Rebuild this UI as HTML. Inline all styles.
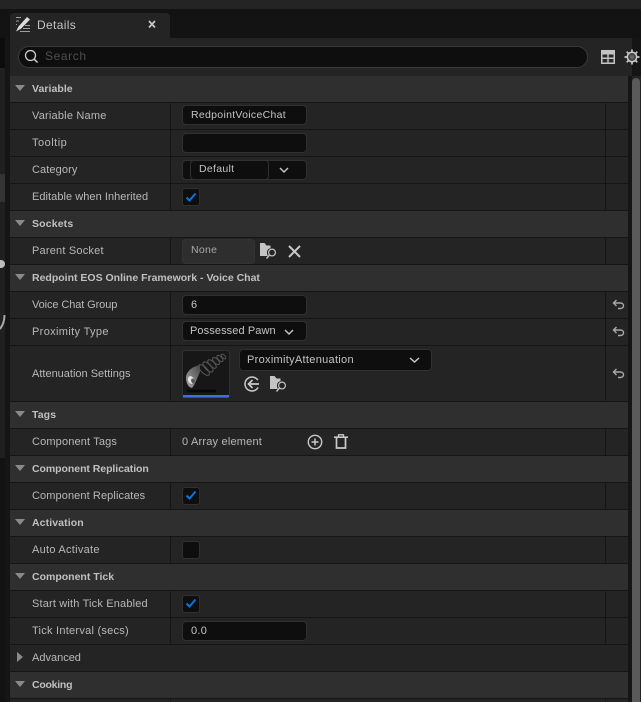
<!DOCTYPE html>
<html><head><meta charset="utf-8"><style>
html,body{margin:0;padding:0;background:#151515;width:641px;height:702px;overflow:hidden}
body{position:relative;font-family:"Liberation Sans",sans-serif;font-size:11px;color:#c0c0c0}
.a{position:absolute}
.h{position:absolute;left:10px;width:618px;height:26px;background:#2f2f2f;border-bottom:1px solid #151515}
.r{position:absolute;left:10px;width:618px;height:26px;background:#242424;border-bottom:1px solid #151515}
.r:before{content:"";position:absolute;left:160px;top:0;bottom:0;width:1px;background:#151515}
.r:after{content:"";position:absolute;left:595px;top:0;bottom:0;width:1px;background:#151515}
.t{position:absolute;left:32px;white-space:nowrap;line-height:13px;color:#b8b8b8}
.b{position:absolute;left:32px;white-space:nowrap;font-weight:bold;font-size:10.5px;line-height:13px;color:#c0c0c0}
.tri{position:absolute;left:15px;width:0;height:0;border-left:5px solid transparent;border-right:5px solid transparent;border-top:6px solid #8a8a8a}
.in{position:absolute;box-sizing:border-box;left:182px;width:125px;height:20px;background:#0e0e0e;border:1px solid #303030;border-radius:4px;color:#c4c4c4;white-space:nowrap;letter-spacing:.3px;line-height:18px;padding-left:8px;font-size:10.5px}
.cb{position:absolute;box-sizing:border-box;left:182px;width:18px;height:18px;background:#0e0e0e;border:1px solid #303030;border-radius:3px}
svg{position:absolute;overflow:visible}
</style></head><body>
<div class="a" style="left:0;top:0;width:641px;height:9px;background:#242424"></div>
<div class="a" style="left:0;top:9px;width:641px;height:29px;background:#131313"></div>
<div class="a" style="left:0;top:38px;width:5px;height:30px;background:#0c0c0c"></div>
<div class="a" style="left:0;top:68px;width:5px;height:220px;background:#202020"></div>
<div class="a" style="left:0;top:174px;width:5px;height:28px;background:#343434"></div>
<div class="a" style="left:0;top:260px;width:5px;height:8px;background:#bdbdbd;border-radius:0 4px 4px 0"></div>
<div class="a" style="left:0;top:288px;width:5px;height:170px;background:#202020"></div>
<div class="a" style="left:0;top:458px;width:5px;height:244px;background:#121212"></div>
<svg style="left:0;top:310px" width="6" height="25"><path d="M4.5 5 Q4.5 13 0 19" stroke="#a8a8a8" stroke-width="2" fill="none"/></svg>

<!-- panel -->
<div class="a" style="left:10px;top:38px;width:622px;height:664px;background:#242424"></div>
<div class="a" style="left:10px;top:13px;width:160px;height:25px;background:#242424;border-radius:4px 4px 0 0"></div>
<svg style="left:15px;top:16px" width="16" height="16" viewBox="0 0 16 16"><path d="M1 1.5h5M1 5h3M1 8.5h1M10 9.5h5M8 12.5h7M5 15.5h10" stroke="#a0a0a0" stroke-width="1" fill="none"/><path d="M3.5 10.5 L12 1 L15 3.5 L6 12.8 L1 15.5 Z" fill="#dcdcdc"/></svg>
<div class="a" style="left:37px;top:18px;font-size:12px;letter-spacing:.35px;line-height:14px;color:#c4c4c4">Details</div>
<svg style="left:148px;top:20px" width="8" height="9"><path d="M1 1L7 7.5M7 1L1 7.5" stroke="#c8c8c8" stroke-width="1.7"/></svg>

<div class="a" style="box-sizing:border-box;left:18px;top:46px;width:570px;height:22px;background:#0e0e0e;border:1px solid #3a3a3a;border-radius:11px"></div>
<svg style="left:24px;top:49px" width="15" height="15"><circle cx="6.5" cy="6.5" r="5" stroke="#d0d0d0" stroke-width="1.3" fill="none"/><path d="M10 10L13.5 13.5" stroke="#d0d0d0" stroke-width="1.5"/></svg>
<div class="a" style="left:45px;top:49px;font-size:12px;letter-spacing:.6px;line-height:14px;color:#4e4e4e">Search</div>
<svg style="left:601px;top:50px" width="14" height="14"><rect x="0" y="0" width="14" height="14" fill="#c4c4c4"/><path d="M1.5 4.5H6.3V7.5H1.5zM7.7 4.5H12.5V7.5H7.7zM1.5 9H6.3V12.5H1.5zM7.7 9H12.5V12.5H7.7z" fill="#2a2a2a"/></svg>
<svg style="left:624px;top:49px" width="16" height="16" viewBox="0 0 16 16"><circle cx="8" cy="8" r="4.7" fill="#444" stroke="#c8c8c8" stroke-width="1.5"/><circle cx="8" cy="8" r="2" fill="#666"/><path d="M8 .5v2.5M8 13v2.5M.5 8H3M13 8h2.5M2.7 2.7l1.8 1.8M11.5 11.5l1.8 1.8M2.7 13.3l1.8-1.8M11.5 4.5l1.8-1.8" stroke="#c8c8c8" stroke-width="1.7"/></svg>

<!-- scrollbar -->
<div class="a" style="left:628px;top:76px;width:4px;height:626px;background:#151515"></div>
<div class="a" style="left:632px;top:76px;width:9px;height:626px;background:#242424"></div>
<div class="a" style="left:632px;top:78px;width:8px;height:624px;background:#5a5a5a;border-radius:4px 4px 0 0"></div>

<!-- rows -->
<div class="h" style="top:76px"></div><div class="tri" style="top:85px"></div><div class="b" style="top:83px;letter-spacing:.05px">Variable</div>
<div class="r" style="top:103px"></div><div class="t" style="top:110px;letter-spacing:.2px">Variable Name</div>
<div class="r" style="top:130px"></div><div class="t" style="top:137px;letter-spacing:.5px">Tooltip</div>
<div class="r" style="top:157px"></div><div class="t" style="top:164px;letter-spacing:.1px">Category</div>
<div class="r" style="top:184px"></div><div class="t" style="top:191px;letter-spacing:.05px">Editable when Inherited</div>
<div class="h" style="top:211px"></div><div class="tri" style="top:220px"></div><div class="b" style="top:218px;letter-spacing:.15px">Sockets</div>
<div class="r" style="top:238px"></div><div class="t" style="top:245px;letter-spacing:.2px">Parent Socket</div>
<div class="h" style="top:265px"></div><div class="tri" style="top:274px"></div><div class="b" style="top:272px;letter-spacing:0">Redpoint EOS Online Framework - Voice Chat</div>
<div class="r" style="top:292px"></div><div class="t" style="top:299px;letter-spacing:-.1px">Voice Chat Group</div>
<div class="r" style="top:319px"></div><div class="t" style="top:326px;letter-spacing:.35px">Proximity Type</div>
<div class="r" style="top:346px;height:55px"></div><div class="t" style="top:368px;letter-spacing:0">Attenuation Settings</div>
<div class="h" style="top:402px"></div><div class="tri" style="top:411px"></div><div class="b" style="top:409px;letter-spacing:.1px">Tags</div>
<div class="r" style="top:429px"></div><div class="t" style="top:436px;letter-spacing:.15px">Component Tags</div>
<div class="h" style="top:456px"></div><div class="tri" style="top:465px"></div><div class="b" style="top:463px;letter-spacing:-.05px">Component Replication</div>
<div class="r" style="top:483px"></div><div class="t" style="top:490px;letter-spacing:.1px">Component Replicates</div>
<div class="h" style="top:510px"></div><div class="tri" style="top:519px"></div><div class="b" style="top:517px;letter-spacing:.1px">Activation</div>
<div class="r" style="top:537px"></div><div class="t" style="top:544px;letter-spacing:.27px">Auto Activate</div>
<div class="h" style="top:564px"></div><div class="tri" style="top:573px"></div><div class="b" style="top:571px;letter-spacing:0">Component Tick</div>
<div class="r" style="top:591px"></div><div class="t" style="top:598px;letter-spacing:.17px">Start with Tick Enabled</div>
<div class="r" style="top:618px"></div><div class="t" style="top:625px;letter-spacing:.25px">Tick Interval (secs)</div>
<div class="a" style="left:10px;top:645px;width:618px;height:26px;background:#242424;border-bottom:1px solid #151515"></div>
<div class="a" style="left:17px;top:652px;width:0;height:0;border-top:5.5px solid transparent;border-bottom:5.5px solid transparent;border-left:6px solid #8a8a8a"></div>
<div class="t" style="top:652px;letter-spacing:0">Advanced</div>
<div class="h" style="top:672px"></div><div class="tri" style="top:681px"></div><div class="b" style="top:679px;letter-spacing:-.25px">Cooking</div>
<div class="r" style="top:699px"></div>

<!-- values -->
<div class="in" style="top:105px">RedpointVoiceChat</div>
<div class="in" style="top:133px"></div>
<div class="in" style="top:160px"></div>
<div class="in" style="left:190px;top:160px;width:79px;padding-left:8px;line-height:17px">Default</div>
<svg style="left:279px;top:167px" width="10" height="7"><path d="M1 1L5 5L9 1" stroke="#c8c8c8" stroke-width="1.4" fill="none"/></svg>
<div class="cb" style="top:188px"></div>
<svg style="left:185px;top:192px" width="12" height="11"><path d="M1.5 5.5L4.5 8.5L10.5 1.5" stroke="#1070e0" stroke-width="2" fill="none"/></svg>

<div class="in" style="top:239px;width:73px;height:25px;background:#2e2e2e;border-color:#333;line-height:20px;color:#a8a8a8">None</div>
<svg style="left:260px;top:243px" width="17" height="17" viewBox="0 0 17 17"><path d="M0 0H4.5L6.5 2.5H10.5V5.2C8 5.5 6.8 7.5 7 10C7 11 7.3 12 8 13H0Z" fill="#c4c4c4"/><circle cx="12" cy="9.5" r="3.4" stroke="#c4c4c4" stroke-width="1.2" fill="none"/><path d="M9.5 12L6.5 15.5" stroke="#c4c4c4" stroke-width="1.4"/></svg>
<svg style="left:288px;top:245px" width="13" height="13"><path d="M1 1L12 12M12 1L1 12" stroke="#c8c8c8" stroke-width="2"/></svg>

<div class="in" style="top:295px;font-size:11px">6</div>
<div class="in" style="top:321px;font-size:11px;letter-spacing:.1px;padding-left:7px">Possessed Pawn</div>
<svg style="left:284px;top:329px" width="10" height="7"><path d="M1 1L5 5L9 1" stroke="#c8c8c8" stroke-width="1.4" fill="none"/></svg>

<!-- thumbnail -->
<svg style="left:182px;top:350px" width="48" height="48" viewBox="0 0 48 48">
<defs><linearGradient id="g" x1="0" y1="1" x2="1" y2="0"><stop offset="0" stop-color="#a8a8a8"/><stop offset="1" stop-color="#484848"/></linearGradient></defs>
<rect x=".5" y=".5" width="47" height="47" rx="3" fill="#171717" stroke="#303030"/>
<g fill="none" stroke="#565656" stroke-width="1"><ellipse cx="22" cy="20" rx="3" ry="7" transform="rotate(-45 22 20)"/><ellipse cx="26" cy="17" rx="3" ry="6.5" transform="rotate(-45 26 17)"/><ellipse cx="30" cy="14" rx="2.5" ry="5.5" transform="rotate(-45 30 14)"/><ellipse cx="34" cy="11" rx="2.2" ry="4.5" transform="rotate(-45 34 11)"/><ellipse cx="38" cy="8.5" rx="2" ry="4" transform="rotate(-45 38 8.5)"/><ellipse cx="41.5" cy="6.5" rx="1.5" ry="3" transform="rotate(-45 41.5 6.5)"/></g>
<path d="M18 15 C12 16 5 20 4 27 C4 33 6 37 10 38 C13 35 15 28 18 22 Z" fill="url(#g)"/>
<ellipse cx="9" cy="30" rx="3" ry="4" fill="#e4e4e4" transform="rotate(-20 9 30)"/>
<ellipse cx="11" cy="31" rx="1.8" ry="2.6" fill="#585858" transform="rotate(-20 11 31)"/>
<path d="M5 41H34" stroke="#060606" stroke-width="2.5"/>
<rect x="1" y="45" width="46" height="2.5" fill="#3f6fd8"/>
</svg>
<div class="in" style="left:239px;top:349px;width:193px;height:22px;line-height:21px;font-size:11px;padding-left:7px">ProximityAttenuation</div>
<svg style="left:409px;top:357px" width="11" height="7"><path d="M1 1L5.5 5L10 1" stroke="#c8c8c8" stroke-width="1.5" fill="none"/></svg>
<svg style="left:244px;top:376px" width="16" height="16"><circle cx="8" cy="8" r="7" stroke="#c8c8c8" stroke-width="1.5" fill="none" stroke-dasharray="36 8" transform="rotate(30 8 8)"/><path d="M15 8H5M8.5 4L4.5 8L8.5 12" stroke="#c8c8c8" stroke-width="1.7" fill="none"/></svg>
<svg style="left:270px;top:376px" width="17" height="17" viewBox="0 0 17 17"><path d="M0 0H4.5L6.5 2.5H10.5V5.2C8 5.5 6.8 7.5 7 10C7 11 7.3 12 8 13H0Z" fill="#c4c4c4"/><circle cx="12" cy="9.5" r="3.4" stroke="#c4c4c4" stroke-width="1.2" fill="none"/><path d="M9.5 12L6.5 15.5" stroke="#c4c4c4" stroke-width="1.4"/></svg>

<!-- reset arrows -->
<svg style="left:612px;top:299px" width="13" height="11"><path d="M4.5 1L1.5 4L4.5 7M1.5 4H8.5C12.5 4 12.5 9.5 8.5 9.5H6" stroke="#a8a8a8" stroke-width="1.4" fill="none"/></svg>
<svg style="left:612px;top:326px" width="13" height="11"><path d="M4.5 1L1.5 4L4.5 7M1.5 4H8.5C12.5 4 12.5 9.5 8.5 9.5H6" stroke="#a8a8a8" stroke-width="1.4" fill="none"/></svg>
<svg style="left:612px;top:368px" width="13" height="11"><path d="M4.5 1L1.5 4L4.5 7M1.5 4H8.5C12.5 4 12.5 9.5 8.5 9.5H6" stroke="#a8a8a8" stroke-width="1.4" fill="none"/></svg>

<div class="a" style="left:182px;top:436px;white-space:nowrap;letter-spacing:.2px;line-height:13px;color:#b8b8b8">0 Array element</div>
<svg style="left:307px;top:434px" width="16" height="16"><circle cx="8" cy="8" r="6.7" stroke="#c8c8c8" stroke-width="1.4" fill="none"/><path d="M4.5 8H11.5M8 4.5V11.5" stroke="#c8c8c8" stroke-width="1.5"/></svg>
<svg style="left:334px;top:434px" width="14" height="15"><path d="M0 3.2H14" stroke="#c8c8c8" stroke-width="1.6"/><path d="M4.5 3V.8H9.5V3" stroke="#c8c8c8" stroke-width="1.3" fill="none"/><path d="M2.5 4V14H11.5V4" stroke="#c8c8c8" stroke-width="1.7" fill="none"/></svg>

<div class="cb" style="top:487px"></div>
<svg style="left:185px;top:490px" width="12" height="11"><path d="M1.5 5.5L4.5 8.5L10.5 1.5" stroke="#1070e0" stroke-width="2" fill="none"/></svg>
<div class="cb" style="top:541px"></div>
<div class="cb" style="top:595px"></div>
<svg style="left:185px;top:598px" width="12" height="11"><path d="M1.5 5.5L4.5 8.5L10.5 1.5" stroke="#1070e0" stroke-width="2" fill="none"/></svg>
<div class="in" style="top:621px;font-size:11px">0.0</div>
</body></html>
